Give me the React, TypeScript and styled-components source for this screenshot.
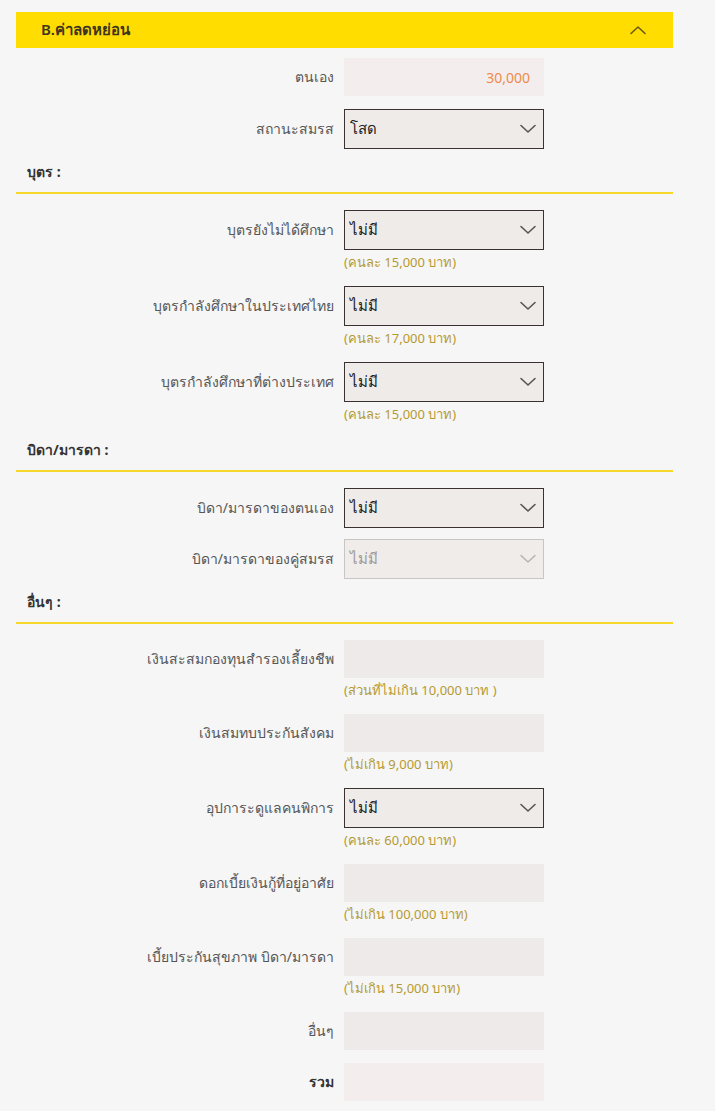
import React from "react";
import styled, { createGlobalStyle } from "styled-components";

const GlobalStyle = createGlobalStyle`
    html, body {
        margin: 0;
        padding: 0;
        background: #f6f6f6;
    }
    body {
        font-family: "Noto Sans", "DejaVu Sans", "Liberation Sans", sans-serif;
        color: #444;
    }
`;

const Page = styled.div`
    padding: 12px 42px 10px 16px;
    box-sizing: border-box;
    width: 715px;
`;

const Header = styled.div`
    display: flex;
    align-items: center;
    justify-content: space-between;
    height: 36px;
    padding: 0 26px 0 25px;
    background-color: #ffdd00;
`;

const HeaderTitle = styled.div`
    font-size: 15px;
    font-weight: 600;
    color: #3d3520;
`;

const Body = styled.div`
    display: flex;
    flex-direction: column;
    padding-top: 10px;
`;

const Row = styled.div<{ gapAfter?: number }>`
    display: flex;
    align-items: flex-start;
    margin-bottom: ${(props) => props.gapAfter ?? 12}px;
`;

const Label = styled.div<{ bold?: boolean; tall?: boolean }>`
    width: 328px;
    flex-shrink: 0;
    box-sizing: border-box;
    padding-right: 10px;
    text-align: right;
    font-size: 14px;
    line-height: ${(props) => (props.tall ? 40 : 38)}px;
    color: ${(props) => (props.bold ? "#333" : "#555")};
    font-weight: ${(props) => (props.bold ? 700 : 400)};
    white-space: nowrap;
`;

const FieldColumn = styled.div`
    display: flex;
    flex-direction: column;
    width: 200px;
`;

const TextBox = styled.div<{ light?: boolean }>`
    height: 38px;
    box-sizing: border-box;
    padding: 0 14px;
    display: flex;
    align-items: center;
    justify-content: flex-end;
    background-color: ${(props) => (props.light ? "#f3eeed" : "#eeeae9")};
    color: #ef8a4c;
    font-size: 14px;
`;

const SelectBox = styled.div<{ disabled?: boolean }>`
    height: 40px;
    box-sizing: border-box;
    display: flex;
    align-items: center;
    justify-content: space-between;
    padding: 0 6px 0 5px;
    border: 1px solid ${(props) => (props.disabled ? "#c9c5c4" : "#3b3131")};
    background-color: ${(props) => (props.disabled ? "#efecea" : "#efebe9")};
    color: ${(props) => (props.disabled ? "#a09a98" : "#222")};
    font-size: 15px;
`;

const Hint = styled.div`
    height: 24px;
    line-height: 24px;
    font-size: 13px;
    color: #b59a32;
    white-space: nowrap;
`;

const SectionTitle = styled.div<{ top: number }>`
    margin-top: ${(props) => props.top}px;
    padding: 0 11px 9px;
    font-size: 14px;
    font-weight: 700;
    line-height: 22px;
    color: #333;
    border-bottom: 2px solid #f6d82b;
    margin-bottom: 16px;
`;

const Chevron: React.FC<{ up?: boolean; color: string }> = ({ up, color }) => (
    <svg width="18" height="10" viewBox="0 0 18 10" fill="none">
        <path
            d={up ? "M2 8.5 L9 2 L16 8.5" : "M2 1.5 L9 8 L16 1.5"}
            stroke={color}
            strokeWidth="1.6"
            strokeLinecap="round"
            strokeLinejoin="round"
        />
    </svg>
);

interface FieldProps {
    label: string;
    kind: "text" | "select";
    value?: string;
    hint?: string;
    disabled?: boolean;
    bold?: boolean;
    light?: boolean;
    gapAfter?: number;
}

const Field: React.FC<FieldProps> = ({ label, kind, value, hint, disabled, bold, light, gapAfter }) => (
    <Row gapAfter={gapAfter}>
        <Label bold={bold} tall={kind === "select"}>{label}</Label>
        <FieldColumn>
            {kind === "select" ? (
                <SelectBox disabled={disabled}>
                    <span>{value}</span>
                    <Chevron color={disabled ? "#b8b4b2" : "#555"} />
                </SelectBox>
            ) : (
                <TextBox light={light}>{value}</TextBox>
            )}
            {hint && <Hint>{hint}</Hint>}
        </FieldColumn>
    </Row>
);

const App: React.FC = () => {
    return (
        <>
            <GlobalStyle />
            <Page>
                <Header>
                    <HeaderTitle>B.ค่าลดหย่อน</HeaderTitle>
                    <Chevron up color="#6b5a10" />
                </Header>
                <Body>
                    <Field label="ตนเอง" kind="text" value="30,000" light gapAfter={13} />
                    <Field label="สถานะสมรส" kind="select" value="โสด" gapAfter={0} />

                    <SectionTitle top={12}>บุตร :</SectionTitle>
                    <Field label="บุตรยังไม่ได้ศึกษา" kind="select" value="ไม่มี" hint="(คนละ 15,000 บาท)" />
                    <Field label="บุตรกำลังศึกษาในประเทศไทย" kind="select" value="ไม่มี" hint="(คนละ 17,000 บาท)" />
                    <Field label="บุตรกำลังศึกษาที่ต่างประเทศ" kind="select" value="ไม่มี" hint="(คนละ 15,000 บาท)" gapAfter={0} />

                    <SectionTitle top={13}>บิดา/มารดา :</SectionTitle>
                    <Field label="บิดา/มารดาของตนเอง" kind="select" value="ไม่มี" gapAfter={11} />
                    <Field label="บิดา/มารดาของคู่สมรส" kind="select" value="ไม่มี" disabled gapAfter={0} />

                    <SectionTitle top={12}>อื่นๆ :</SectionTitle>
                    <Field label="เงินสะสมกองทุนสำรองเลี้ยงชีพ" kind="text" hint="(ส่วนที่ไม่เกิน 10,000 บาท )" />
                    <Field label="เงินสมทบประกันสังคม" kind="text" hint="(ไม่เกิน 9,000 บาท)" />
                    <Field label="อุปการะดูแลคนพิการ" kind="select" value="ไม่มี" hint="(คนละ 60,000 บาท)" />
                    <Field label="ดอกเบี้ยเงินกู้ที่อยู่อาศัย" kind="text" hint="(ไม่เกิน 100,000 บาท)" />
                    <Field label="เบี้ยประกันสุขภาพ บิดา/มารดา" kind="text" hint="(ไม่เกิน 15,000 บาท)" />
                    <Field label="อื่นๆ" kind="text" gapAfter={13} />
                    <Field label="รวม" kind="text" bold light />
                </Body>
            </Page>
        </>
    );
};

export default App;
